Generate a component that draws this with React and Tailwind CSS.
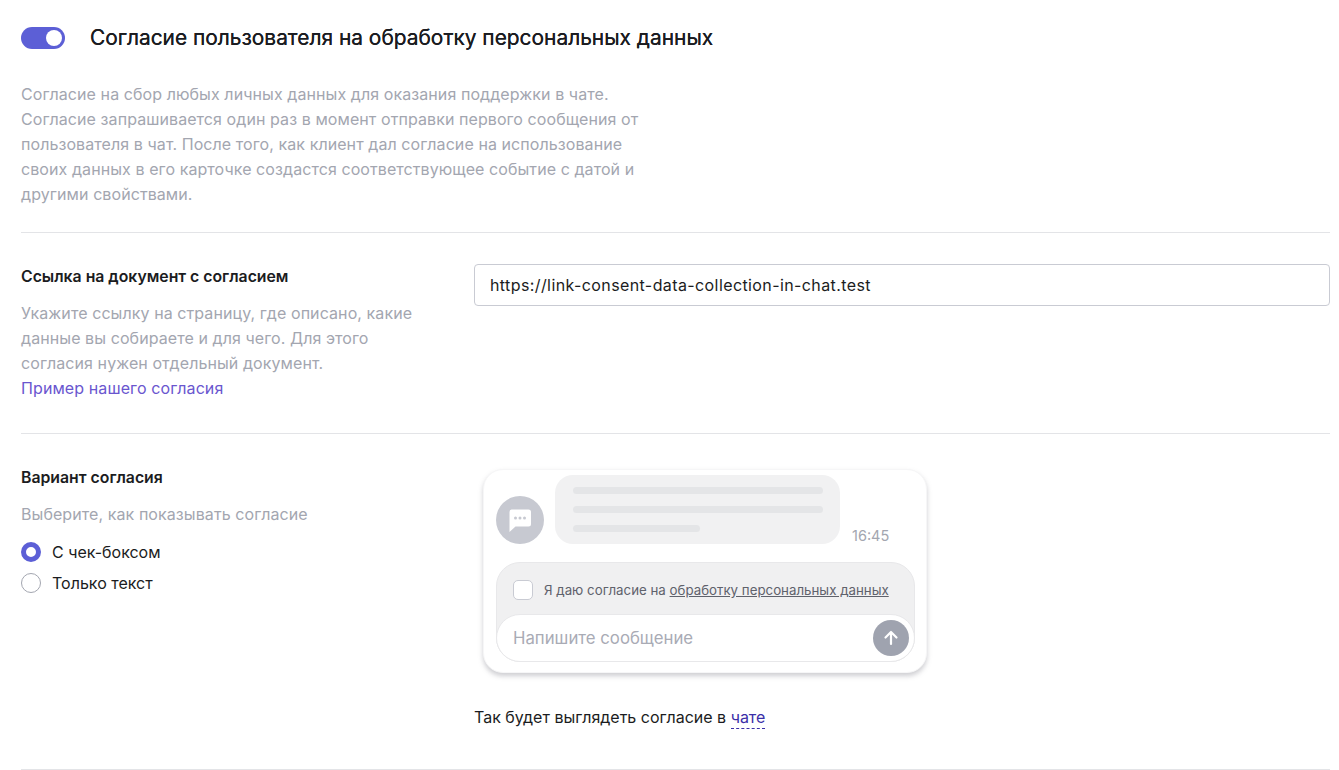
import React from "react";

const font = { fontFamily: "Inter, 'Noto Sans', sans-serif" };

function Line({ w }) {
  return <div className={`h-[7px] rounded-full bg-[#e4e5e7] ${w}`} />;
}

function ChatPreview() {
  return (
    <div className="ml-[9px] mt-[4px] w-[444px] h-[204px] rounded-[20px] bg-white shadow-[0_3px_5px_rgba(120,120,130,0.36)] border border-[#f6f6f7] flex flex-col">
      <div className="flex pl-[12px] pt-[5px] h-[92px]">
        <div className="mt-[21px] w-[48px] h-[48px] rounded-full bg-[#c7c9d1] flex items-center justify-center">
          <svg width="24" height="24" viewBox="0 0 24 24">
            <path d="M3.5 1.5h17a2.5 2.5 0 0 1 2.5 2.5v12a2.5 2.5 0 0 1-2.5 2.5H7.5L1.5 24V4a2.5 2.5 0 0 1 2-2.5z" fill="#fff" />
            <circle cx="7.5" cy="10" r="1.5" fill="#c7c9d1" />
            <circle cx="12" cy="10" r="1.5" fill="#c7c9d1" />
            <circle cx="16.5" cy="10" r="1.5" fill="#c7c9d1" />
          </svg>
        </div>
        <div className="ml-[11px] w-[285px] h-[69px] rounded-[18px] bg-[#f1f1f2] pl-[18px] pt-[12px] flex flex-col gap-[12px]">
          <Line w="w-[250px]" />
          <Line w="w-[250px]" />
          <Line w="w-[127px]" />
        </div>
        <div className="ml-[12px] mt-[51px] text-[14.5px] leading-[20px] text-[#a3a6b0]">16:45</div>
      </div>
      <div className="mx-[12px] w-[419px] h-[100px] rounded-[24px] bg-[#f0f0f1] border border-[#e8e8ea] flex flex-col">
        <div className="h-[51px] flex items-center pl-[16px] pt-[5px]">
          <div className="w-[20px] h-[20px] rounded-[5px] bg-white border border-[#c9cbd3] -mt-[3px]" />
          <div className="ml-[11px] text-[13.3px] text-[#5f626c] whitespace-nowrap">
            Я даю согласие на <span className="underline">обработку персональных данных</span>
          </div>
        </div>
        <div className="flex-1 -mx-[1px] -mb-[1px] rounded-[24px] bg-white border border-[#e8e8ea] flex items-center justify-between pl-[16px] pr-[5px]">
          <span className="text-[16.75px] pt-[2px] text-[#a9abb5]">Напишите сообщение</span>
          <div className="w-[36px] h-[36px] rounded-full bg-[#9fa3af] flex items-center justify-center">
            <svg width="18" height="18" viewBox="0 0 18 18" fill="none" stroke="#fff" strokeWidth="2.2" strokeLinecap="round" strokeLinejoin="round">
              <path d="M9 15V3M3.5 8.5 9 3l5.5 5.5" />
            </svg>
          </div>
        </div>
      </div>
    </div>
  );
}

export default function App() {
  return (
    <div style={font} className="w-[1339px] h-[770px] overflow-hidden bg-white text-[#1b1c21] pl-[21px] pr-[9px]">
      <div className="flex items-center h-[75px]">
        <div className="w-[44px] h-[22px] rounded-full bg-[#5c5fd6] flex items-center justify-end pr-[3px]">
          <div className="w-[16px] h-[16px] rounded-full bg-white" />
        </div>
        <h1 className="ml-[25px] text-[20.9px] leading-[28px] font-normal [text-shadow:0_0_0.3px_#1b1c21]">Согласие пользователя на обработку персональных данных</h1>
      </div>
      <p className="mt-[7px] w-[630px] text-[16px] leading-[25px] tracking-[0.08px] text-[#a3a6b0]">
        Согласие на сбор любых личных данных для оказания поддержки в чате. Согласие запрашивается один раз в момент отправки первого сообщения от пользователя в чат. После того, как клиент дал согласие на использование своих данных в его карточке создастся соответствующее событие с датой и другими свойствами.
      </p>
      <div className="mt-[25px] border-t border-[#e3e4e7]" />
      <div className="flex h-[200px] pt-[32px]">
        <div className="w-[453px]">
          <div className="text-[15.8px] leading-[24px] font-semibold">Ссылка на документ с согласием</div>
          <p className="mt-[12px] w-[400px] text-[16px] leading-[25px] tracking-[0.08px] text-[#a3a6b0]">
            Укажите ссылку на страницу, где описано, какие данные вы собираете и для чего. Для этого согласия нужен отдельный документ.
          </p>
          <a className="block text-[16px] leading-[25px] tracking-[0.1px] text-[#6a56cf]">Пример нашего согласия</a>
        </div>
        <div className="flex-1 -mt-[1px]">
          <div className="h-[42px] rounded-[4px] border border-[#c9cbd3] flex items-center pl-[15px] text-[16px] tracking-[0.4px]">
            https://link-consent-data-collection-in-chat.test
          </div>
        </div>
      </div>
      <div className="border-t border-[#e3e4e7]" />
      <div className="flex h-[335px] pt-[32px]">
        <div className="w-[453px]">
          <div className="text-[15.8px] leading-[24px] font-semibold">Вариант согласия</div>
          <p className="mt-[12px] text-[16px] leading-[25px] tracking-[0.08px] text-[#a3a6b0]">Выберите, как показывать согласие</p>
          <div className="mt-[12px] flex items-center h-[25px]">
            <div className="w-[20px] h-[20px] rounded-full border-[5px] border-[#5c5fd6] bg-white" />
            <span className="ml-[11px] text-[16px]">С чек-боксом</span>
          </div>
          <div className="mt-[6px] flex items-center h-[25px]">
            <div className="w-[20px] h-[20px] rounded-full border border-[#a3a6b0] bg-white" />
            <span className="ml-[11px] text-[16px]">Только текст</span>
          </div>
        </div>
        <div className="flex-1 -mt-[1px]">
          <ChatPreview />
          <div className="mt-[32px] text-[16px] leading-[25px]">
            Так будет выглядеть согласие в{" "}
            <span className="text-[#3b2fa8] border-b border-dashed border-[#3b2fa8] pb-[1px]">чате</span>
          </div>
        </div>
      </div>
      <div className="border-t border-[#e3e4e7]" />
    </div>
  );
}
